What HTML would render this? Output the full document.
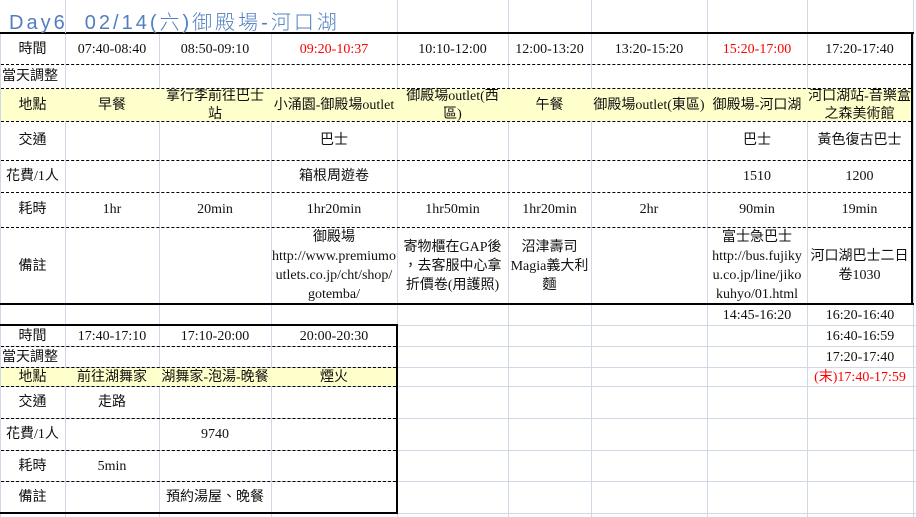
<!DOCTYPE html>
<html><head><meta charset="utf-8"><style>
*{margin:0;padding:0;box-sizing:border-box}
body{width:916px;height:517px;background:#fff;position:relative;overflow:hidden;font-family:"Liberation Serif","Noto Sans CJK TC",serif;font-size:14px;color:#111}
.v{position:absolute;width:1px;background:#d0d7e5}
.h{position:absolute;height:1px;background:#d0d7e5}
.y{position:absolute;background:#ffffcc}
.d{position:absolute;height:0;border-top:1px dashed #000}
.t{position:absolute;background:#000}
.c{position:absolute;display:flex;align-items:center;justify-content:center;text-align:center;line-height:19px;white-space:nowrap}
.s{line-height:18px;padding-top:2px}
.l{justify-content:flex-start;padding-left:4px}
.r{color:#f00}
</style></head><body>
<div class="v" style="left:0;top:0;height:517px"></div>
<div class="v" style="left:65px;top:0;height:517px"></div>
<div class="v" style="left:159px;top:33px;height:484px"></div>
<div class="v" style="left:271px;top:33px;height:484px"></div>
<div class="v" style="left:397px;top:0;height:517px"></div>
<div class="v" style="left:508px;top:0;height:517px"></div>
<div class="v" style="left:591px;top:0;height:517px"></div>
<div class="v" style="left:707px;top:0;height:517px"></div>
<div class="v" style="left:807px;top:0;height:517px"></div>
<div class="v" style="left:913px;top:0;height:517px"></div>
<div class="h" style="left:0;top:325px;width:916px"></div>
<div class="h" style="left:0;top:346px;width:916px"></div>
<div class="h" style="left:0;top:367px;width:916px"></div>
<div class="h" style="left:0;top:386px;width:916px"></div>
<div class="h" style="left:0;top:418px;width:916px"></div>
<div class="h" style="left:0;top:450px;width:916px"></div>
<div class="h" style="left:0;top:481px;width:916px"></div>
<div class="h" style="left:0;top:513px;width:916px"></div>
<div class="y" style="left:1px;top:89px;width:911px;height:32px"></div>
<div class="y" style="left:1px;top:368px;width:396px;height:18px"></div>
<div class="t" style="left:0;top:32px;width:914px;height:2px"></div>
<div class="t" style="left:0;top:303px;width:914px;height:2px"></div>
<div class="t" style="left:911px;top:32px;width:2px;height:273px"></div>
<div class="d" style="left:1px;top:64px;width:910px"></div>
<div class="d" style="left:1px;top:88px;width:910px"></div>
<div class="d" style="left:1px;top:121px;width:910px"></div>
<div class="d" style="left:1px;top:160px;width:910px"></div>
<div class="d" style="left:1px;top:192px;width:910px"></div>
<div class="d" style="left:1px;top:227px;width:910px"></div>
<div class="t" style="left:0;top:324px;width:398px;height:2px"></div>
<div class="t" style="left:0;top:512px;width:398px;height:2px"></div>
<div class="t" style="left:396px;top:324px;width:2px;height:190px"></div>
<div class="d" style="left:1px;top:346px;width:395px"></div>
<div class="d" style="left:1px;top:367px;width:395px"></div>
<div class="d" style="left:1px;top:386px;width:395px"></div>
<div class="d" style="left:1px;top:418px;width:395px"></div>
<div class="d" style="left:1px;top:450px;width:395px"></div>
<div class="d" style="left:1px;top:481px;width:395px"></div>
<div style="position:absolute;left:0;top:0;width:397px;height:32px;background:#fff"></div>
<div class="v" style="left:65px;top:0;height:33px"></div>
<div style="position:absolute;left:9px;top:6px;font-family:'Liberation Sans','Noto Sans CJK TC',sans-serif;font-size:20px;color:#4f7fc0;letter-spacing:3px;white-space:nowrap;font-weight:300">Day6&nbsp;&nbsp;02/14(六)御殿場-河口湖</div>
<div class="c" style="left:0;top:34px;width:65px;height:30px">時間</div>
<div class="c" style="left:65px;top:34px;width:94px;height:30px">07:40-08:40</div>
<div class="c" style="left:159px;top:34px;width:112px;height:30px">08:50-09:10</div>
<div class="c r" style="left:271px;top:34px;width:126px;height:30px">09:20-10:37</div>
<div class="c" style="left:397px;top:34px;width:111px;height:30px">10:10-12:00</div>
<div class="c" style="left:508px;top:34px;width:83px;height:30px">12:00-13:20</div>
<div class="c" style="left:591px;top:34px;width:116px;height:30px">13:20-15:20</div>
<div class="c r" style="left:707px;top:34px;width:100px;height:30px">15:20-17:00</div>
<div class="c" style="left:807px;top:34px;width:105px;height:30px">17:20-17:40</div>
<div class="c l" style="left:0;top:64px;width:80px;height:24px;padding-left:2px">當天調整</div>
<div class="c" style="left:0;top:89px;width:65px;height:32px">地點</div>
<div class="c" style="left:65px;top:89px;width:94px;height:32px">早餐</div>
<div class="c s" style="left:159px;top:89px;width:112px;height:32px">拿行李前往巴士<br>站</div>
<div class="c" style="left:271px;top:89px;width:126px;height:32px">小涌園-御殿場outlet</div>
<div class="c s" style="left:397px;top:89px;width:111px;height:32px">御殿場outlet(西<br>區)</div>
<div class="c" style="left:508px;top:89px;width:83px;height:32px">午餐</div>
<div class="c" style="left:591px;top:89px;width:116px;height:32px">御殿場outlet(東區)</div>
<div class="c" style="left:707px;top:89px;width:100px;height:32px">御殿場-河口湖</div>
<div class="c s" style="left:807px;top:89px;width:105px;height:32px">河口湖站-音樂盒<br>之森美術館</div>
<div class="c" style="left:0;top:121px;width:65px;height:39px">交通</div>
<div class="c" style="left:271px;top:121px;width:126px;height:39px">巴士</div>
<div class="c" style="left:707px;top:121px;width:100px;height:39px">巴士</div>
<div class="c" style="left:807px;top:121px;width:105px;height:39px">黃色復古巴士</div>
<div class="c" style="left:0;top:160px;width:65px;height:32px">花費/1人</div>
<div class="c" style="left:271px;top:160px;width:126px;height:32px">箱根周遊卷</div>
<div class="c" style="left:707px;top:160px;width:100px;height:32px">1510</div>
<div class="c" style="left:807px;top:160px;width:105px;height:32px">1200</div>
<div class="c" style="left:0;top:192px;width:65px;height:35px">耗時</div>
<div class="c" style="left:65px;top:192px;width:94px;height:35px">1hr</div>
<div class="c" style="left:159px;top:192px;width:112px;height:35px">20min</div>
<div class="c" style="left:271px;top:192px;width:126px;height:35px">1hr20min</div>
<div class="c" style="left:397px;top:192px;width:111px;height:35px">1hr50min</div>
<div class="c" style="left:508px;top:192px;width:83px;height:35px">1hr20min</div>
<div class="c" style="left:591px;top:192px;width:116px;height:35px">2hr</div>
<div class="c" style="left:707px;top:192px;width:100px;height:35px">90min</div>
<div class="c" style="left:807px;top:192px;width:105px;height:35px">19min</div>
<div class="c" style="left:0;top:228px;width:65px;height:76px">備註</div>
<div class="c" style="left:271px;top:228px;width:126px;height:76px">御殿場<br>http://www.premiumo<br>utlets.co.jp/cht/shop/<br>gotemba/</div>
<div class="c" style="left:397px;top:228px;width:111px;height:76px">寄物櫃在GAP後<br>，去客服中心拿<br>折價卷(用護照)</div>
<div class="c" style="left:508px;top:228px;width:83px;height:76px">沼津壽司<br>Magia義大利<br>麵</div>
<div class="c" style="left:707px;top:228px;width:100px;height:76px">富士急巴士<br>http://bus.fujiky<br>u.co.jp/line/jiko<br>kuhyo/01.html</div>
<div class="c" style="left:807px;top:228px;width:105px;height:76px">河口湖巴士二日<br>卷1030</div>
<div class="c" style="left:707px;top:305px;width:100px;height:20px">14:45-16:20</div>
<div class="c" style="left:807px;top:305px;width:106px;height:20px">16:20-16:40</div>
<div class="c" style="left:807px;top:326px;width:106px;height:20px">16:40-16:59</div>
<div class="c" style="left:807px;top:347px;width:106px;height:20px">17:20-17:40</div>
<div class="c r" style="left:807px;top:368px;width:106px;height:18px">(末)17:40-17:59</div>
<div class="c" style="left:0;top:326px;width:65px;height:20px">時間</div>
<div class="c" style="left:65px;top:326px;width:94px;height:20px">17:40-17:10</div>
<div class="c" style="left:159px;top:326px;width:112px;height:20px">17:10-20:00</div>
<div class="c" style="left:271px;top:326px;width:126px;height:20px">20:00-20:30</div>
<div class="c l" style="left:0;top:347px;width:80px;height:20px;padding-left:2px">當天調整</div>
<div class="c" style="left:0;top:368px;width:65px;height:18px">地點</div>
<div class="c" style="left:65px;top:368px;width:94px;height:18px">前往湖舞家</div>
<div class="c" style="left:159px;top:368px;width:112px;height:18px">湖舞家-泡湯-晚餐</div>
<div class="c" style="left:271px;top:368px;width:126px;height:18px">煙火</div>
<div class="c" style="left:0;top:387px;width:65px;height:31px">交通</div>
<div class="c" style="left:65px;top:387px;width:94px;height:31px">走路</div>
<div class="c" style="left:0;top:419px;width:65px;height:31px">花費/1人</div>
<div class="c" style="left:159px;top:419px;width:112px;height:31px">9740</div>
<div class="c" style="left:0;top:451px;width:65px;height:30px">耗時</div>
<div class="c" style="left:65px;top:451px;width:94px;height:30px">5min</div>
<div class="c" style="left:0;top:482px;width:65px;height:30px">備註</div>
<div class="c" style="left:159px;top:482px;width:112px;height:30px">預約湯屋、晚餐</div>
</body></html>
